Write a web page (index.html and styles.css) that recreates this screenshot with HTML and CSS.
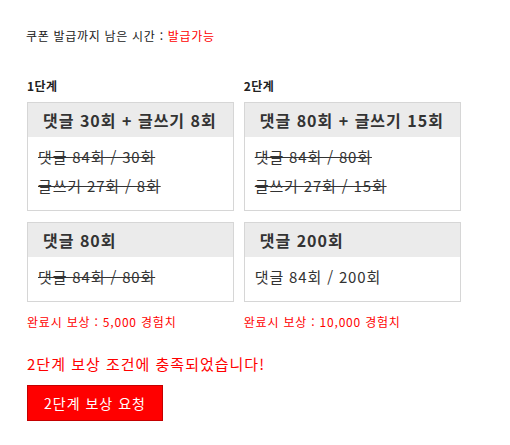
FILE: index.html
```html
<!DOCTYPE html>
<html lang="ko">
<head>
<meta charset="utf-8">
<title>쿠폰</title>
<link rel="stylesheet" href="styles.css">
</head>
<body>
<div class="page">
  <p class="remain">쿠폰 발급까지 남은 시간 : <span class="red">발급가능</span></p>
  <div class="steps">
    <div class="col">
      <h3 class="step-title">1단계</h3>
      <div class="box">
        <div class="box-head">댓글 30회 + 글쓰기 8회</div>
        <div class="box-body">
          <p class="line done">댓글 84회 / 30회</p>
          <p class="line done">글쓰기 27회 / 8회</p>
        </div>
      </div>
      <div class="box">
        <div class="box-head">댓글 80회</div>
        <div class="box-body">
          <p class="line done">댓글 84회 / 80회</p>
        </div>
      </div>
      <p class="reward">완료시 보상 : 5,000 경험치</p>
    </div>
    <div class="col">
      <h3 class="step-title">2단계</h3>
      <div class="box">
        <div class="box-head">댓글 80회 + 글쓰기 15회</div>
        <div class="box-body">
          <p class="line done">댓글 84회 / 80회</p>
          <p class="line done">글쓰기 27회 / 15회</p>
        </div>
      </div>
      <div class="box">
        <div class="box-head">댓글 200회</div>
        <div class="box-body">
          <p class="line">댓글 84회 / 200회</p>
        </div>
      </div>
      <p class="reward">완료시 보상 : 10,000 경험치</p>
    </div>
  </div>
  <p class="satisfied">2단계 보상 조건에 충족되었습니다!</p>
  <button class="req-btn" type="button">2단계 보상 요청</button>
</div>
</body>
</html>
```
FILE: styles.css
```css
* { box-sizing: border-box; }
html, body { margin: 0; padding: 0; background: #fff; }
body {
  font-family: "Noto Sans CJK KR", "Noto Sans", "Liberation Sans", sans-serif;
  color: #333;
}
.page { padding: 28px 0 0 26px; }
.remain { margin: 0; font-size: 12px; line-height: 16px; color: #222; letter-spacing: 0.7px; }
.red { color: #ff0000; }
.steps { display: flex; gap: 9px; margin-top: 34px; align-items: flex-start; }
.col { display: flex; flex-direction: column; }
.step-title { margin: 0 0 8px 1px; font-size: 12px; line-height: 16px; font-weight: bold; color: #222; letter-spacing: 0.5px; }
.box { border: 1px solid #d6d6d6; margin-left: 1px; background: #fff; }
.box + .box { margin-top: 11px; }
.box-head {
  background: #ebebeb;
  height: 34px;
  line-height: 34px;
  padding: 0 16px 0 15px;
  font-size: 16px;
  font-weight: bold;
  color: #333;
  letter-spacing: 1px;
  white-space: nowrap;
}
.box-body { padding: 6px 10px 10px; }
.line { margin: 0; font-size: 15px; line-height: 28px; color: #333; letter-spacing: 0.85px; white-space: nowrap; }
.line + .line { margin-top: 1px; }
.done { text-decoration: line-through; }
.reward { margin: 12px 0 0 1px; font-size: 12px; line-height: 16px; color: #ff0000; letter-spacing: 0.8px; }
.satisfied { margin: 23px 0 0 1px; font-size: 15px; line-height: 22px; color: #ff0000; letter-spacing: 1px; }
.req-btn {
  margin: 10px 0 0 1px;
  height: 36px;
  padding: 0 16px;
  background: #ff0000;
  border: 1px solid #c40000;
  color: #fff;
  font-family: inherit;
  font-size: 14px;
  letter-spacing: 1px;
  cursor: pointer;
}
```
